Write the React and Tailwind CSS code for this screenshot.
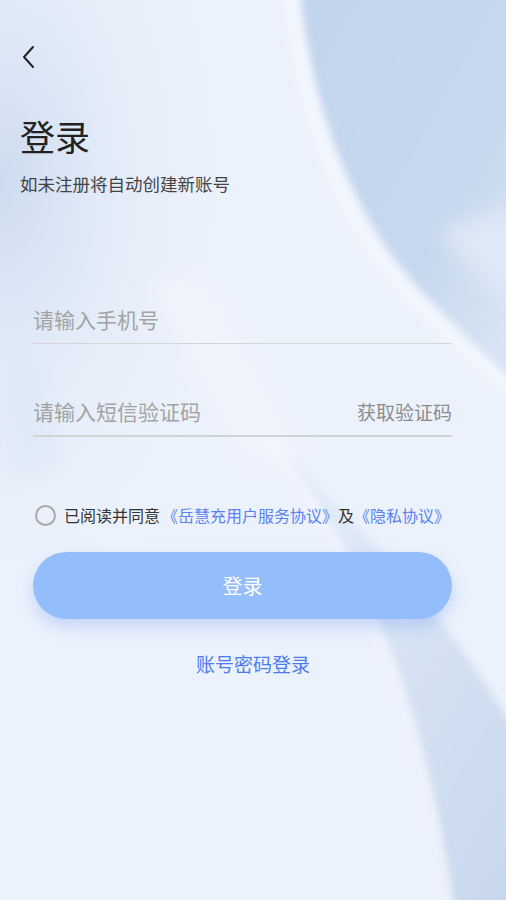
import React, { useState } from 'react';

const Backdrop = () => (
    <svg className="absolute inset-0 w-full h-full" viewBox="0 0 506 900" preserveAspectRatio="none">
        <defs>
            <linearGradient id="topRight" x1="0" y1="0" x2="1" y2="1">
                <stop offset="0" stopColor="#c2d4ec" />
                <stop offset="0.6" stopColor="#c7d8ee" />
                <stop offset="1" stopColor="#dfe9f7" />
            </linearGradient>
            <linearGradient id="bottomRight" x1="0" y1="0" x2="1" y2="1">
                <stop offset="0" stopColor="#e6eefb" />
                <stop offset="1" stopColor="#c6d6ec" />
            </linearGradient>
            <radialGradient id="leftGlow" cx="0" cy="0.2" r="0.5">
                <stop offset="0" stopColor="#cddbef" />
                <stop offset="1" stopColor="#ecf2fc" stopOpacity="0" />
            </radialGradient>
            <filter id="soft" x="-20%" y="-20%" width="140%" height="140%">
                <feGaussianBlur stdDeviation="10" />
            </filter>
            <filter id="softer" x="-20%" y="-20%" width="140%" height="140%">
                <feGaussianBlur stdDeviation="4" />
            </filter>
        </defs>
        <rect width="506" height="900" fill="#ecf2fc" />
        <rect width="506" height="900" fill="url(#leftGlow)" />
        {/* top right swoosh */}
        <path d="M298,-20 C312,120 360,230 430,300 C460,330 490,360 530,400 L530,-20 Z" fill="url(#topRight)" filter="url(#softer)" />
        <path d="M440,230 C470,270 500,300 530,320 L530,200 C500,210 470,220 440,230 Z" fill="#dfe8f6" filter="url(#soft)" />
        {/* white highlight along curve */}
        <path d="M290,-10 C305,130 350,240 425,310 C470,355 500,380 520,400" stroke="#f4f8ff" strokeWidth="10" fill="none" filter="url(#softer)" />
        {/* diagonal light streak across form */}
        <path d="M150,280 L200,280 L300,460 L250,460 Z" fill="#f3f7fe" opacity="0.7" filter="url(#soft)" />
        <path d="M0,380 L40,360 L60,470 L0,480 Z" fill="#dde7f6" opacity="0.6" filter="url(#soft)" />
        {/* lower right swoosh */}
        <path d="M270,440 C360,560 420,700 450,910 L530,910 L530,760 C500,700 440,600 270,440 Z" fill="url(#bottomRight)" filter="url(#softer)" />
        <path d="M270,440 C360,560 420,700 450,910" stroke="#f5f8ff" strokeWidth="6" fill="none" filter="url(#softer)" />
    </svg>
);

const App = () => {
    const [agreed, setAgreed] = useState(false);

    return (
        <div
            className="relative w-full h-[900px] overflow-hidden"
            style={{ fontFamily: '"Noto Sans CJK SC", "Noto Sans", sans-serif' }}
        >
            <Backdrop />

            <div className="relative z-10 flex flex-col">
                {/* Header */}
                <div className="px-[20px] pt-[44px]">
                    <button className="w-[18px] h-[26px] flex items-center">
                        <svg width="18" height="26" viewBox="0 0 18 26" fill="none">
                            <path d="M13 3 L4 13 L13 23" stroke="#222" strokeWidth="2" strokeLinecap="round" strokeLinejoin="round" />
                        </svg>
                    </button>
                    <h1 className="mt-[44px] text-[35px] leading-[44px] text-[#222] font-normal">登录</h1>
                    <p className="mt-[14px] text-[17.5px] leading-[24px] text-[#444]">如未注册将自动创建新账号</p>
                </div>

                {/* Form */}
                <div className="pl-[33px] pr-[54px] mt-[100px] flex flex-col">
                    <div className="h-[48px] flex items-center border-b border-[#d4d6da]">
                        <input
                            className="w-full bg-transparent outline-none text-[21px] text-[#333] placeholder:text-[#a3a3a3]"
                            placeholder="请输入手机号"
                        />
                    </div>
                    <div className="mt-[45px] h-[48px] flex items-center border-b-2 border-[#d2d3d6]">
                        <input
                            className="flex-1 min-w-0 bg-transparent outline-none text-[21px] text-[#333] placeholder:text-[#a3a3a3]"
                            placeholder="请输入短信验证码"
                        />
                        <span className="text-[19px] text-[#8c8c8c] whitespace-nowrap">获取验证码</span>
                    </div>

                    {/* Agreement */}
                    <div className="mt-[66px] h-[24px] flex items-center text-[16px] whitespace-nowrap">
                        <button
                            onClick={() => setAgreed(!agreed)}
                            className={`w-[21px] h-[21px] ml-[2px] rounded-full border-2 ${agreed ? 'border-[#4a7cf0] bg-[#4a7cf0]' : 'border-[#a9a9a9]'}`}
                        />
                        <span className="ml-[8px] text-[#333]">已阅读并同意</span>
                        <span className="ml-[2px] text-[#5a82f0]">《岳慧充用户服务协议》</span>
                        <span className="text-[#333]">及</span>
                        <span className="text-[#5a82f0]">《隐私协议》</span>
                    </div>

                    <button className="mt-[25px] h-[67px] w-full rounded-full bg-[#93bdfb] text-white text-[20px] shadow-[0_8px_16px_rgba(120,160,240,0.35)]">
                        登录
                    </button>
                </div>

                <div className="mt-[32px] w-full text-center text-[19px] leading-[26px] text-[#4c7bf0]">账号密码登录</div>
            </div>
        </div>
    );
};

export default App;
